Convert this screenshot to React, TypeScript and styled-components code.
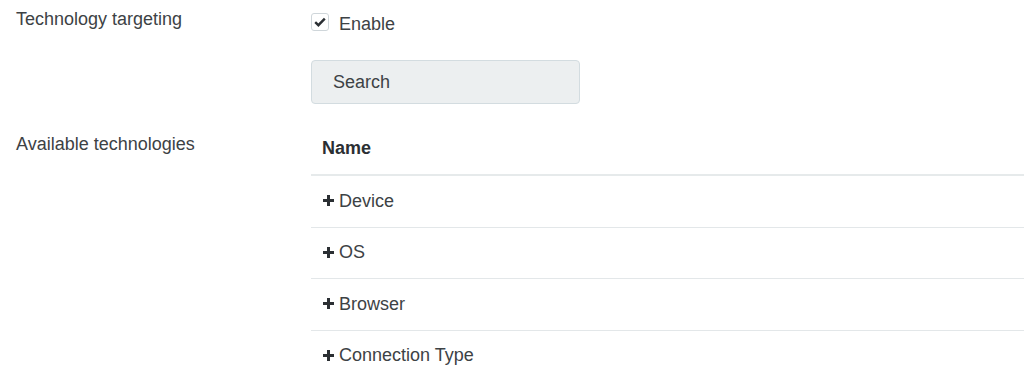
import React from 'react'
import styled, { createGlobalStyle } from 'styled-components'

const GlobalStyle = createGlobalStyle`
  html, body {
    margin: 0;
    padding: 0;
    background: #fff;
  }
  body {
    font-family: "Liberation Sans", Arial, sans-serif;
    font-size: 18px;
    color: #333;
  }
`

const Form = styled.div`
  display: grid;
  grid-template-columns: 311px 1fr;
  row-gap: 18px;
`

const Label = styled.div<{ $top: number }>`
  padding: ${p => p.$top}px 0 0 16px;
  line-height: 24px;
  color: #3d4245;
`

const Field = styled.div`
  display: flex;
  flex-direction: column;
  align-items: flex-start;
`

const CheckRow = styled.label`
  display: flex;
  align-items: flex-start;
  gap: 10px;
  padding-top: 12px;
  line-height: 24px;
  color: #3d4245;
`

const Box = styled.span`
  width: 16px;
  height: 16px;
  margin-top: 1px;
  border: 1px solid #cfd6da;
  border-radius: 3px;
  display: flex;
  align-items: center;
  justify-content: center;
  background: #fff;
`

const SearchButton = styled.button`
  margin-top: 24px;
  width: 269px;
  height: 44px;
  padding: 0 21px;
  text-align: left;
  font: inherit;
  color: #3d4245;
  background: #eceff0;
  border: 1px solid #d3dce0;
  border-radius: 4px;
`

const Table = styled.table`
  width: 100%;
  border-collapse: collapse;
`

const Th = styled.th`
  text-align: left;
  padding: 14px 11px;
  line-height: 24px;
  font-weight: bold;
  color: #2b2f33;
  border-bottom: 2px solid #e6eaeb;
`

const Td = styled.td`
  padding: 12px 11px 14px;
  line-height: 24px;
  color: #3d4245;
  border-top: 1px solid #e3e7e9;
`

const RowName = styled.span`
  display: inline-flex;
  align-items: center;
  gap: 5px;
  padding-left: 1px;
`

const Plus = () => (
  <svg width="11" height="11" viewBox="0 0 11 11">
    <rect x="4" y="0" width="3" height="11" fill="#2b2f33" />
    <rect x="0" y="4" width="11" height="3" fill="#2b2f33" />
  </svg>
)

const technologies = ['Device', 'OS', 'Browser', 'Connection Type']

const App = () => {
  return (
    <>
      <GlobalStyle />
      <Form>
        <Label $top={7}>Technology targeting</Label>
        <Field>
          <CheckRow>
            <Box>
              <svg width="12" height="10" viewBox="0 0 12 10">
                <path d="M1.2 5.2 L4.4 8.2 L10.8 1.6" fill="none" stroke="#2b2f33" strokeWidth="2.4" />
              </svg>
            </Box>
            Enable
          </CheckRow>
          <SearchButton>Search</SearchButton>
        </Field>

        <Label $top={10}>Available technologies</Label>
        <Table>
          <thead>
            <tr>
              <Th>Name</Th>
            </tr>
          </thead>
          <tbody>
            {technologies.map(t => (
              <tr key={t}>
                <Td>
                  <RowName>
                    <Plus />
                    {t}
                  </RowName>
                </Td>
              </tr>
            ))}
          </tbody>
        </Table>
      </Form>
    </>
  )
}

export default App
